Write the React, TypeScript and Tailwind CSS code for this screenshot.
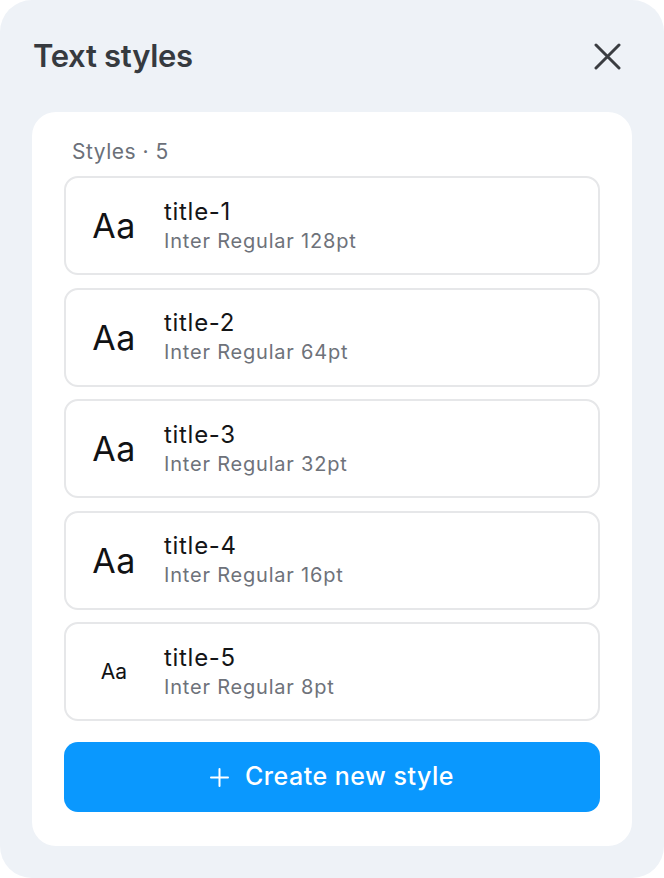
import React from 'react';

const styles = [
  { name: 'title-1', size: 128, big: true },
  { name: 'title-2', size: 64, big: true },
  { name: 'title-3', size: 32, big: true },
  { name: 'title-4', size: 16, big: true },
  { name: 'title-5', size: 8, big: false },
];

export default function App() {
  return (
    <div className="w-[664px] h-[878px] bg-white" style={{ fontFamily: 'Inter, "Noto Sans", sans-serif' }}>
      <div className="w-full h-full bg-[#eef2f7] rounded-[32px] px-8 pt-[36px]">
        {/* header */}
        <div className="flex items-center justify-between h-[40px]">
          <h1 className="pl-px text-[31px] font-semibold text-[#363a3f] tracking-[-0.3px]">Text styles</h1>
          <button className="w-[40px] h-[40px] flex items-center justify-center mr-[5px] text-[#3a3d41]">
            <svg width="27" height="27" viewBox="0 0 27 27" fill="none">
              <path d="M2 2L25 25M25 2L2 25" stroke="currentColor" strokeWidth="3" strokeLinecap="round" />
            </svg>
          </button>
        </div>

        {/* card */}
        <div className="mt-[36px] bg-white rounded-[24px] px-8 pt-[26px] pb-[34px]">
          <div className="pl-2 h-[28px] leading-[28px] text-[21px] tracking-[0.5px] text-[#6b7079] mb-[10px]">Styles · 5</div>

          <div className="flex flex-col gap-[12.5px]">
            {styles.map((s) => (
              <div
                key={s.name}
                className="h-[99px] flex items-center border-2 border-[#e6e7e9] rounded-[14px] pl-[12px]"
              >
                <div
                  className={`w-[72px] text-center text-[#111214] ${
                    s.big ? 'text-[34px] tracking-[0.5px]' : 'text-[21px]'
                  }`}
                >
                  Aa
                </div>
                <div className="ml-[14px] flex flex-col">
                  <span className="text-[24px] leading-[30px] tracking-[0.7px] text-[#141517]">{s.name}</span>
                  <span className="text-[20px] leading-[28px] tracking-[0.8px] text-[#6e727a]">Inter Regular {s.size}pt</span>
                </div>
              </div>
            ))}
          </div>

          <button className="mt-[21px] w-full h-[70px] rounded-[14px] bg-[#0a98fe] flex items-center justify-center gap-[16px] text-white">
            <svg width="19" height="19" viewBox="0 0 19 19" fill="none">
              <path d="M9.5 1V18M1 9.5H18" stroke="currentColor" strokeWidth="2" strokeLinecap="round" />
            </svg>
            <span className="text-[25px] font-medium tracking-[0.5px]">Create new style</span>
          </button>
        </div>
      </div>
    </div>
  );
}
